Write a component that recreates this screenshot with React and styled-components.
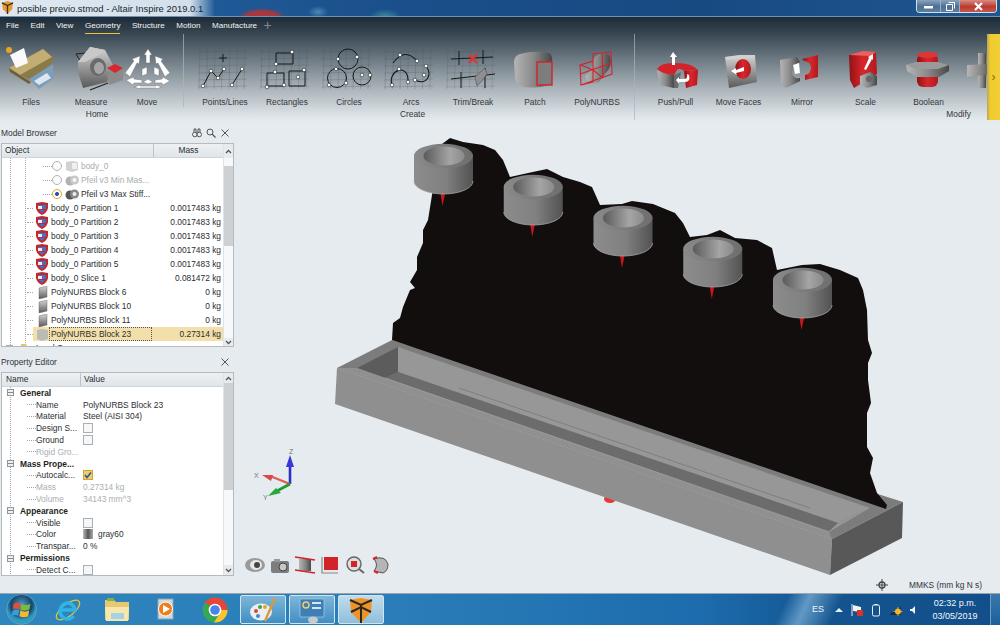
import React from 'react'
import styled, { createGlobalStyle } from 'styled-components'

const Global = createGlobalStyle`
  html, body { margin: 0; padding: 0; height: 100%; overflow: hidden; }
  body { font-family: "Liberation Sans", Arial, sans-serif; color: #2a2d30; }
  * { box-sizing: border-box; }
`

const Screen = styled.div`
  width: 1000px;
  height: 625px;
  display: flex;
  flex-direction: column;
  overflow: hidden;
  background: #e5ebef;
`

const DefsHost = styled.svg`
  position: absolute;
  width: 0;
  height: 0;
`

/* title bar */
const TitleBar = styled.div`
  height: 17px;
  flex: none;
  display: flex;
  align-items: flex-start;
  border-bottom: 1px solid #6f93b8;
  background:
    radial-gradient(ellipse 24px 9px at 262px 17px, #a8383f 0, #a8383f 60%, transparent 100%),
    radial-gradient(ellipse 10px 6px at 318px 12px, #4f86b5 0, transparent 100%),
    radial-gradient(ellipse 16px 8px at 385px 17px, #3f8d9b 0, transparent 100%),
    linear-gradient(90deg, #dfe8f1 0, #d3e0ec 190px, #1f5a96 215px, #1a4f8b 400px, #184a82 700px, #1e5690 1000px);
`
const AppGlyph = styled.svg`
  width: 13px;
  height: 13px;
  margin: 1px 3px 0 1px;
  flex: none;
`
const TitleText = styled.div`
  font-size: 9.45px;
  line-height: 17px;
  color: #20262c;
  white-space: nowrap;
`
const WindowButtons = styled.div`
  margin-left: auto;
  margin-right: 3px;
  display: flex;
  height: 13px;
  border: 1px solid #d7dfe7;
  border-top: 0;
  border-radius: 0 0 4px 4px;
  overflow: hidden;
`
const WindowButton = styled.div`
  width: ${p => p.$w}px;
  display: flex;
  align-items: center;
  justify-content: center;
  border-right: 1px solid #9cb0c4;
  background: ${p => p.$close
    ? 'linear-gradient(#d98d85, #b93a2e 55%, #c4574a)'
    : 'linear-gradient(#8aa3bd, #4c6f93 55%, #5e7f9f)'};
  &:last-child { border-right: 0; }
`

/* ribbon */
const RibbonArea = styled.div`
  height: 105px;
  flex: none;
  display: flex;
  flex-direction: column;
  background: linear-gradient(#1d2b36 0, #3b4a55 18%, #78848d 45%, #aab3b9 68%, #dde3e7 94%, #e5ebef 100%);
`
const MenuBar = styled.div`
  height: 17px;
  flex: none;
  display: flex;
  align-items: center;
  padding-left: 6px;
  gap: 11.5px;
`
const MenuItem = styled.div`
  font-size: 8.1px;
  line-height: 17px;
  height: 17px;
  color: #f3f5f6;
  box-shadow: ${p => p.$active ? 'inset 0 -1px 0 #e8c43c' : 'none'};
`
const MenuPlus = styled.span`
  font-size: 14px;
  line-height: 17px;
  margin-left: -5px;
  color: #7f8a92;
`
const ToolStrip = styled.div`
  flex: 1;
  display: flex;
  min-height: 0;
`
const Group = styled.div`
  width: ${p => p.$w}px;
  flex: none;
  display: flex;
  flex-direction: column;
  height: 86px;
  overflow: hidden;
  background: ${p => p.$sep
    ? `linear-gradient(rgba(170, 180, 187, .7), rgba(170, 180, 187, .7)) right top / 1px ${p.$sep}px no-repeat`
    : 'none'};
`
const ToolRow = styled.div`
  display: flex;
  height: 74px;
  padding-left: ${p => p.$pad}px;
`
const Tool = styled.div`
  width: ${p => p.$w}px;
  flex: none;
  display: flex;
  flex-direction: column;
  align-items: center;
`
const ToolIcon = styled.svg`
  width: 60px;
  height: 48px;
  flex: none;
  margin-top: 10px;
  overflow: visible;
`
const ToolLabel = styled.div`
  font-size: 8.4px;
  line-height: 12px;
  margin-top: 4px;
  white-space: nowrap;
  color: #33383c;
`
const GroupLabel = styled.div`
  font-size: 8.4px;
  line-height: 12px;
  color: #33383c;
  text-align: ${p => p.$right ? 'right' : 'center'};
  padding: ${p => p.$right ? '0 16px 0 0' : `0 0 0 ${p.$pad}px`};
`
const ExpandHandle = styled.div`
  width: 13px;
  height: 86px;
  flex: none;
  display: flex;
  align-items: center;
  justify-content: center;
  font-size: 12px;
  color: #7a6210;
  background: linear-gradient(90deg, #b7a659, #f0cb2c 25%, #f2cf38);
`

/* main area */
const Main = styled.div`
  flex: 1;
  display: flex;
  min-height: 0;
`
const SidePanel = styled.div`
  width: 235px;
  flex: none;
  display: flex;
  flex-direction: column;
  padding-left: 1px;
`
const PanelHead = styled.div`
  display: flex;
  align-items: center;
  height: ${p => p.$h}px;
  padding: ${p => p.$pt}px 5px 0 0;
  font-size: 8.4px;
  color: #30353a;
`
const PanelTools = styled.div`
  margin-left: auto;
  display: flex;
  align-items: center;
  gap: 4px;
`
const HeadIcon = styled.svg`
  width: 10px;
  height: 10px;
`
const Frame = styled.div`
  width: 233px;
  height: ${p => p.$h}px;
  flex: none;
  display: flex;
  border: 1px solid #b4bbc0;
  background: #fff;
  overflow: hidden;
`
const FrameLeft = styled.div`
  flex: 1;
  min-width: 0;
  display: flex;
  flex-direction: column;
`
const ColumnHeads = styled.div`
  height: 14px;
  flex: none;
  display: flex;
  background: linear-gradient(#eef1f3, #dfe5e9);
  border-bottom: 1px solid #cfd5d9;
`
const ColumnHead = styled.div`
  width: ${p => p.$w ? `${p.$w}px` : 'auto'};
  flex: ${p => p.$w ? 'none' : '1'};
  padding-left: ${p => p.$pad || 0}px;
  font-size: 8.4px;
  line-height: 13px;
  text-align: ${p => p.$center ? 'center' : 'left'};
  border-right: ${p => p.$w ? '1px solid #bcc4c9' : '0'};
`
const dots = x => `linear-gradient(#a9a9a9 50%, transparent 50%) ${x}px 0 / 1px 2px repeat-y`
const TreeBody = styled.div`
  flex: 1;
  overflow: hidden;
  padding-top: 1px;
  background: ${dots(8)}, ${dots(23)};
`
const TreeRow = styled.div`
  height: 14px;
  flex: none;
  display: flex;
  align-items: center;
`
const Tick = styled.div`
  width: ${p => p.$w}px;
  margin-left: ${p => p.$ml}px;
  flex: none;
  border-top: 1px dotted #a5a5a5;
`
const RowBody = styled.div`
  flex: 1;
  height: 14px;
  min-width: 0;
  display: flex;
  align-items: center;
  background: ${p => p.$selected ? '#f3dfa9' : 'transparent'};
`
const RowGlyph = styled.svg`
  width: ${p => p.$w || 14}px;
  height: 13px;
  flex: none;
  opacity: ${p => p.$muted ? 0.45 : 1};
`
const RowName = styled.div`
  flex: none;
  width: ${p => p.$w}px;
  height: 14px;
  line-height: 12px;
  font-size: 8.4px;
  white-space: nowrap;
  padding-left: 1px;
  overflow: hidden;
  border: 1px ${p => p.$selected ? 'dotted #555' : 'solid transparent'};
  color: ${p => p.$muted ? '#a8acae' : '#2b2f33'};
`
const RowMass = styled.div`
  flex: 1;
  font-size: 8.4px;
  text-align: right;
  white-space: nowrap;
  padding-right: 2px;
`
const Radio = styled.span`
  width: 10px;
  height: 10px;
  flex: none;
  margin-right: 3px;
  border-radius: 50%;
  border: 1px solid ${p => p.$on ? '#d9a825' : '#aeb3b6'};
  background: ${p => p.$on ? 'radial-gradient(#2a55a8 0 30%, #fff 40%)' : '#fbfbfb'};
`
const LoadBox = styled.span`
  width: 7px;
  height: 7px;
  flex: none;
  margin: 0 7px 0 4px;
  border: 1px solid #a9aeb2;
`
const Scrollbar = styled.div`
  width: 10px;
  flex: none;
  display: flex;
  flex-direction: column;
  background: #f7f8f9;
  border-left: 1px solid #dfe3e6;
`
const ScrollArrow = styled.div`
  height: ${p => p.$h}px;
  flex: none;
  display: flex;
  align-items: center;
  justify-content: center;
  background: #e7ebee;
  & svg { width: 7px; height: 5px; }
`
const ScrollTrack = styled.div`
  flex: 1;
  padding-top: ${p => p.$top}px;
`
const ScrollThumb = styled.div`
  height: ${p => p.$h}px;
  background: #cdd1d4;
`
const PropBody = styled.div`
  flex: 1;
  overflow: hidden;
  background: ${dots(8)};
`
const PropRow = styled.div`
  height: 11.8px;
  display: flex;
  align-items: center;
  font-size: 8.4px;
  white-space: nowrap;
  color: ${p => p.$muted ? '#aab0b3' : '#2b2f33'};
`
const CategoryBox = styled.span`
  width: 7px;
  height: 7px;
  flex: none;
  margin: 0 6px 0 5px;
  background: linear-gradient(#888, #888) center / 5px 1px no-repeat, #eef1f3;
  border: 1px solid #8e979d;
`
const CategoryName = styled.span`
  font-weight: bold;
  color: #1c1f22;
`
const PropName = styled.div`
  width: 44px;
  flex: none;
  overflow: hidden;
`
const PropValue = styled.div`
  margin-left: 3px;
  display: flex;
  align-items: center;
  gap: 5px;
`
const Check = styled.span`
  width: 10px;
  height: 10px;
  flex: none;
  display: flex;
  align-items: center;
  justify-content: center;
  border: 1px solid ${p => p.$on ? '#c9a63a' : '#a9aeb2'};
  background: ${p => p.$on ? '#f1cf60' : '#f6f7f8'};
  & svg { width: 8px; height: 8px; }
`
const Swatch = styled.span`
  width: 10px;
  height: 10px;
  flex: none;
  background: linear-gradient(90deg, #bbb, #555 50%, #aaa);
`

/* viewport */
const Viewport = styled.div`
  flex: 1;
  min-width: 0;
  position: relative;
  display: flex;
  align-items: flex-end;
  justify-content: space-between;
`
const Scene = styled.svg`
  position: absolute;
  inset: 0;
  width: 765px;
  height: 471px;
`
const ViewTools = styled.div`
  position: relative;
  display: flex;
  align-items: center;
  gap: 3px;
  margin: 0 0 19px 9px;
`
const ViewTool = styled.svg`
  width: 22px;
  height: 18px;
  flex: none;
`
const UnitBar = styled.div`
  position: relative;
  display: flex;
  align-items: center;
  margin: 0 18px 2px 0;
  font-size: 8.4px;
  color: #30353a;
`
const Crosshair = styled.svg`
  width: 12px;
  height: 12px;
  margin-right: 21px;
`

/* taskbar */
const Taskbar = styled.div`
  height: 32px;
  flex: none;
  display: flex;
  align-items: stretch;
  border-top: 1px solid #9aa5ad;
  background:
    linear-gradient(115deg, transparent 715px, rgba(160, 205, 235, .55) 735px, transparent 765px),
    linear-gradient(90deg, #2f85bd 0, #2a7db8 400px, #1d6cad 700px, #13548f 830px, #124f8a 1000px);
`
const TaskSlot = styled.div`
  width: ${p => p.$w}px;
  flex: none;
  display: flex;
  align-items: center;
  justify-content: center;
`
const TaskButton = styled.div`
  width: 46px;
  margin: 1px 3px 1px 0;
  flex: none;
  display: flex;
  align-items: center;
  justify-content: center;
  border: 1px solid #d0e4f1;
  border-radius: 2px;
  background: ${p => p.$active
    ? 'linear-gradient(#c2dcec, #8fbfdc)'
    : 'linear-gradient(#7fb6d8, #3f8fc4)'};
`
const TaskGlyph = styled.svg`
  width: ${p => p.$size || 28}px;
  height: ${p => p.$size || 28}px;
`
const Tray = styled.div`
  margin-left: auto;
  display: flex;
  align-items: stretch;
`
const TrayText = styled.div`
  width: ${p => p.$w}px;
  flex: none;
  display: flex;
  flex-direction: column;
  align-items: center;
  justify-content: center;
  font-size: 9px;
  line-height: 12.5px;
  color: #f2f6fa;
`
const TrayGlyph = styled.svg`
  width: 14px;
  height: 14px;
`
const ShowDesktop = styled.div`
  width: 10px;
  flex: none;
  border-left: 1px solid #6f9cc2;
  background: linear-gradient(#3a78ac, #1d5f9b);
`

const grid = (() => {
  let d = ''
  for (let i = 0; i < 7; i++) d += `M${5 + i * 7.5} 5L${4 + i * 7.5} 45`
  for (let i = 0; i < 6; i++) d += `M3 ${8 + i * 7}L52 ${7 + i * 7}`
  return d
})()

const Sketch = ({ children, dots: pts }) => (
  <ToolIcon viewBox="0 0 60 48">
    <path d={grid} stroke="#4d555b" strokeWidth=".6" opacity=".45" fill="none" />
    <g fill="none" stroke="#15191c" strokeWidth="1">{children}</g>
    {pts.map(([x, y], i) => <circle key={i} cx={x} cy={y} r="1.8" fill="#fff" stroke="#222" strokeWidth=".6" />)}
  </ToolIcon>
)

const FilesIcon = () => (
  <ToolIcon viewBox="0 0 60 48">
    <polygon points="8,24 42,5 53,14 50,20 34,38 30,37" fill="#8a7a48" />
    <polygon points="28,35 52,20 53,34 38,45" fill="#7d9dbd" />
    <polygon points="33,37 46,29 50,34 38,41" fill="#dde7ef" />
    <polygon points="8,24 42,5 51,13 19,31" fill="#c2ae72" />
    <polygon points="8,24 19,31 30,38 28,40 9,28" fill="#6f6136" />
    <polygon points="9,11 23,4 27,19 15,24" fill="#fafafa" />
    <circle cx="8" cy="6" r="3" fill="#e9a520" />
  </ToolIcon>
)
const MeasureIcon = () => (
  <ToolIcon viewBox="0 0 60 48">
    <path d="M15 10L24 9M15 10L20 18" stroke="#222" strokeWidth="1" fill="none" />
    <polygon points="17,18 29,3 44,6 52,21 46,38 22,44 17,28" fill="url(#metalV)" />
    <polygon points="17,18 29,3 44,6 36,12 24,18" fill="#c9c9c9" />
    <ellipse cx="37" cy="23" rx="8" ry="9" fill="#6a6a6a" />
    <ellipse cx="38" cy="24" rx="5" ry="6" fill="#a5a5a5" />
    <polygon points="46,30 62,26 62,36 48,41" fill="#8b8b8b" />
    <polygon points="46,24 54,20 62,24 54,29" fill="#d8282c" />
    <path d="M29 46L47 39" stroke="#222" strokeWidth="1.2" />
  </ToolIcon>
)
const MoveIcon = () => (
  <ToolIcon viewBox="0 0 60 48">
    <g fill="#fff" stroke="#777" strokeWidth=".5">
      <polygon points="31,5 35,11 33,11 33,19 29,19 29,11 27,11" />
      <polygon points="11,31 8,29 17,17 15,15 23,12 22,20 20,19 13,33" />
      <polygon points="50,31 53,29 44,17 46,15 38,12 39,20 41,19 48,33" />
      <polygon points="25,25 30,23 30,30 25,32" />
      <polygon points="37,23 42,25 42,32 37,30" />
      <polygon points="9,36 17,33 17,35 25,36 25,39 17,39 16,41" />
      <polygon points="53,37 46,33 45,35 38,36 38,39 45,39 46,41" />
      <polygon points="26,38 31,35 36,38 31,40" />
      <polygon points="17,43 23,41 23,42 39,42 39,41 45,43 39,45 39,44 23,44 23,45" />
    </g>
  </ToolIcon>
)
const PointsIcon = () => (
  <Sketch dots={[[8, 42], [16, 27], [23, 34], [29, 25], [37, 41], [47, 25]]}>
    <path d="M8 42L16 27L23 34L29 25M37 41L47 25M28 10V18M24 14H32" />
  </Sketch>
)
const RectanglesIcon = () => (
  <Sketch dots={[[35, 8], [19, 20], [18, 28], [10, 43], [27, 41], [47, 26], [41, 33]]}>
    <path d="M19 9H36V20H19ZM10 29H27V42H10ZM32 27H48V42H32Z" />
  </Sketch>
)
const CirclesIcon = () => (
  <Sketch dots={[[19, 15], [38, 13], [17, 25], [10, 41], [27, 39], [43, 31], [51, 31]]}>
    <circle cx="29" cy="15" r="10" /><circle cx="18" cy="34" r="9.5" /><circle cx="43" cy="32" r="9" />
  </Sketch>
)
const ArcsIcon = () => (
  <Sketch dots={[[19, 11], [36, 17], [18, 25], [11, 41], [27, 38], [34, 36], [43, 31], [45, 22]]}>
    <path d="M12 19Q24 3 36 17M11 41C6 26 28 18 27 38M34 36C46 42 52 30 45 22" strokeWidth="1.1" />
  </Sketch>
)
const TrimIcon = () => (
  <ToolIcon viewBox="0 0 60 48">
    <path d={grid} stroke="#4d555b" strokeWidth=".5" opacity=".4" fill="none" />
    <path d="M8 15L50 13M16 7V21M40 6V20M8 35L52 30M18 28V44M42 24V44" stroke="#15191c" strokeWidth="1" fill="none" />
    <path d="M26 11L34 19M34 10L26 19" stroke="#e0352e" strokeWidth="2.2" />
    <path d="M32 33L42 24L44 30L38 38L34 42Z" fill="#8f8f8f" stroke="#444" strokeWidth=".5" />
  </ToolIcon>
)
const PatchIcon = () => (
  <ToolIcon viewBox="0 0 60 48">
    <path d="M15 10Q30 6 44 9Q48 11 47 18L46 40Q30 46 16 42Q10 40 10 34L9 18Q9 12 15 10Z" fill="url(#metalH)" />
    <rect x="32" y="18" width="15" height="23" fill="#7d7d7d" stroke="#d2232a" strokeWidth="1.4" />
  </ToolIcon>
)
const PolyIcon = () => (
  <ToolIcon viewBox="0 0 60 48">
    <path d="M27 14Q36 4 43 12Q46 22 38 30L32 38Q20 42 18 32Q24 28 25 22Z" fill="url(#metalH)" />
    <path d="M26 10L44 8L45 30L14 41L13 21L26 17ZM35 9L36 34M26 10V38M13 30L45 19M14 21L26 26L36 34M26 38L14 41" fill="none" stroke="#d2232a" strokeWidth="1.1" />
  </ToolIcon>
)
const PushIcon = () => (
  <ToolIcon viewBox="0 0 60 48">
    <polygon points="38,27 52,26 51,41 40,44" fill="url(#redH)" />
    <polygon points="11,26 28,31 28,44 14,41" fill="url(#metalH)" />
    <polygon points="28,31 35,28 32,44 28,44" fill="#6b6b6b" />
    <path d="M11 25Q14 19 27 19Q45 18 52 26L38 27Q32 22 30 28L28 31Q16 30 11 25Z" fill="#d2232a" />
    <polygon points="27,8 31,13 29,13 29,21 26,21 26,13 24,13" fill="#fff" />
    <path d="M30 36L33 33V35H38Q42 35 41 30L43 31Q45 38 39 38H33V40Z" fill="#fff" />
  </ToolIcon>
)
const FacesIcon = () => (
  <ToolIcon viewBox="0 0 60 48">
    <polygon points="16,13 46,11 48,38 20,44" fill="url(#metalV)" />
    <polygon points="16,13 30,11 46,11 44,14 18,16" fill="#d0d0d0" />
    <ellipse cx="34" cy="25" rx="8" ry="10" fill="url(#redH)" />
    <polygon points="22,27 27,24 27,26 35,23 35,27 27,29 28,31" fill="#fff" />
  </ToolIcon>
)
const MirrorIcon = () => (
  <ToolIcon viewBox="0 0 60 48">
    <path d="M8 16L25 13L28 18Q19 22 20 30Q22 35 28 34V37L14 44L9 40Z" fill="url(#metalH)" />
    <path d="M30 15L46 11L46 33L33 36V31Q39 30 39 23Q38 17 32 17Z" fill="url(#redH)" />
    <polygon points="21,21 27,19 28,29 23,30" fill="#fff" />
  </ToolIcon>
)
const ScaleIcon = () => (
  <ToolIcon viewBox="0 0 60 48">
    <polygon points="13,11 40,8 41,30 18,44 14,36" fill="url(#redH)" />
    <polygon points="13,11 27,7 40,8 34,12" fill="#ef5f5f" />
    <polygon points="24,32 34,28 41,32 41,41 31,44 24,40" fill="url(#metalH)" />
    <circle cx="33" cy="35" r="3" fill="#666" />
    <polygon points="37,10 37,16 36,15 30,26 28,25 33,14 32,13" fill="#fff" />
  </ToolIcon>
)
const BooleanIcon = () => (
  <ToolIcon viewBox="0 0 60 48">
    <rect x="18" y="10" width="21" height="33" rx="6" fill="url(#redH)" />
    <ellipse cx="28.5" cy="11" rx="10.5" ry="3" fill="#e23434" />
    <polygon points="7,21 18,18 39,18 50,21 50,27 40,33 18,33 8,27" fill="url(#metalH)" />
    <polygon points="7,21 18,18 39,18 50,21 39,25 18,25" fill="#9a9a9a" />
  </ToolIcon>
)
const PartialIcon = () => (
  <ToolIcon viewBox="0 0 60 48">
    <rect x="35" y="9" width="8" height="35" fill="url(#metalH)" />
    <polygon points="24,21 50,20 50,30 24,33" fill="url(#metalH)" />
  </ToolIcon>
)

const Shield = () => (
  <RowGlyph viewBox="0 0 14 13">
    <path d="M1 1L7 0L13 1V6Q12 11 7 13Q2 11 1 6Z" fill="#c2272d" />
    <rect x="3" y="3" width="8" height="4" fill="#3f73c9" />
    <rect x="3" y="4" width="4" height="3" fill="#e8eef6" />
    <path d="M4 8H10L7 11Z" fill="#3f73c9" />
  </RowGlyph>
)
const BlockGlyph = ({ selected }) => (
  <RowGlyph viewBox="0 0 14 13">
    {selected
      ? <path d="M2 2L7 1L13 2V11L7 13L2 11Z" fill="#b9bcb6" />
      : <path d="M4 2L12 0V11L4 13Z" fill="url(#metalV)" stroke="#555" strokeWidth=".4" />}
  </RowGlyph>
)
const GhostGlyph = () => (
  <RowGlyph viewBox="0 0 14 13" $muted>
    <path d="M1 2L7 1L13 2V10L7 12L1 10Z" fill="#9a9a9a" /><path d="M7 3H12V9H7Z" fill="#dcdcdc" />
  </RowGlyph>
)
const PartGlyph = ({ muted }) => (
  <RowGlyph viewBox="0 0 14 13" $muted={muted}>
    <circle cx="5" cy="7" r="4.5" fill="#555" /><circle cx="9.5" cy="6" r="4.5" fill="#888" /><circle cx="9.5" cy="6" r="2" fill="#eee" />
  </RowGlyph>
)

const parts = [
  'body_0 Partition 1', 'body_0 Partition 2', 'body_0 Partition 3',
  'body_0 Partition 4', 'body_0 Partition 5',
]

const SubRow = ({ name, glyph, on, muted }) => (
  <TreeRow>
    <Tick $ml={41} $w={9} />
    <RowBody>
      <Radio $on={on} />
      {glyph}
      <RowName $w={86} $muted={muted}>{name}</RowName>
    </RowBody>
  </TreeRow>
)

const ItemRow = ({ name, mass, glyph, selected }) => (
  <TreeRow>
    <Tick $ml={25} $w={6} />
    <RowBody $selected={selected}>
      <RowGlyph $w={2} as="span" />
      {glyph}
      <RowName $w={103} $selected={selected}>{name}</RowName>
      <RowMass>{mass}</RowMass>
    </RowBody>
  </TreeRow>
)

const Arrow = ({ up }) => (
  <svg viewBox="0 0 7 5"><path d={up ? 'M1 4L3.5 1.5L6 4' : 'M1 1L3.5 3.5L6 1'} fill="none" stroke="#555" strokeWidth="1.3" /></svg>
)

const CloseGlyph = () => (
  <HeadIcon viewBox="0 0 10 10"><path d="M1.5 1.5L8.5 8.5M8.5 1.5L1.5 8.5" stroke="#555" strokeWidth="1" /></HeadIcon>
)

const ModelBrowser = () => (
  <>
    <PanelHead $h={21} $pt={1}>
      Model Browser
      <PanelTools>
        <HeadIcon viewBox="0 0 10 10"><circle cx="2.8" cy="6.5" r="2.3" fill="none" stroke="#555" /><circle cx="7.2" cy="6.5" r="2.3" fill="none" stroke="#555" /><path d="M2 4V1H4V5M8 4V1H6V5" fill="none" stroke="#555" /></HeadIcon>
        <HeadIcon viewBox="0 0 10 10"><circle cx="4" cy="4" r="3" fill="none" stroke="#555" /><path d="M6 6L9.5 9.5" stroke="#555" strokeWidth="1.3" /></HeadIcon>
        <CloseGlyph />
      </PanelTools>
    </PanelHead>
    <Frame $h={204}>
      <FrameLeft>
        <ColumnHeads>
          <ColumnHead $w={152} $pad={3}>Object</ColumnHead>
          <ColumnHead $center>Mass</ColumnHead>
        </ColumnHeads>
        <TreeBody>
          <SubRow name="body_0" glyph={<GhostGlyph />} muted />
          <SubRow name="Pfeil v3 Min Mas..." glyph={<PartGlyph muted />} muted />
          <SubRow name="Pfeil v3 Max Stiff..." glyph={<PartGlyph />} on />
          {parts.map(p => <ItemRow key={p} name={p} mass="0.0017483 kg" glyph={<Shield />} />)}
          <ItemRow name="body_0 Slice 1" mass="0.081472 kg" glyph={<Shield />} />
          <ItemRow name="PolyNURBS Block 6" mass="0 kg" glyph={<BlockGlyph />} />
          <ItemRow name="PolyNURBS Block 10" mass="0 kg" glyph={<BlockGlyph />} />
          <ItemRow name="PolyNURBS Block 11" mass="0 kg" glyph={<BlockGlyph />} />
          <ItemRow name="PolyNURBS Block 23" mass="0.27314 kg" glyph={<BlockGlyph selected />} selected />
          <TreeRow>
            <LoadBox />
            <RowGlyph viewBox="0 0 14 13"><path d="M1 2H6L7 4H13V12H1Z" fill="#e3c56d" /></RowGlyph>
            <RowName $w={80}>Load Cases</RowName>
          </TreeRow>
        </TreeBody>
      </FrameLeft>
      <Scrollbar>
        <ScrollArrow $h={14}><Arrow up /></ScrollArrow>
        <ScrollTrack $top={8}><ScrollThumb $h={80} /></ScrollTrack>
        <ScrollArrow $h={8}><Arrow /></ScrollArrow>
      </Scrollbar>
    </Frame>
  </>
)

const Prop = ({ name, muted, children }) => (
  <PropRow $muted={muted}>
    <Tick $ml={25} $w={9} />
    <PropName>{name}</PropName>
    <PropValue>{children}</PropValue>
  </PropRow>
)
const Category = ({ name }) => (
  <PropRow><CategoryBox /><CategoryName>{name}</CategoryName></PropRow>
)

const PropertyEditor = () => (
  <>
    <PanelHead $h={25} $pt={4}>
      Property Editor
      <PanelTools><CloseGlyph /></PanelTools>
    </PanelHead>
    <Frame $h={204}>
      <FrameLeft>
        <ColumnHeads>
          <ColumnHead $w={79} $pad={4}>Name</ColumnHead>
          <ColumnHead $pad={3}>Value</ColumnHead>
        </ColumnHeads>
        <PropBody>
          <Category name="General" />
          <Prop name="Name">PolyNURBS Block 23</Prop>
          <Prop name="Material">Steel (AISI 304)</Prop>
          <Prop name="Design S..."><Check /></Prop>
          <Prop name="Ground"><Check /></Prop>
          <Prop name="Rigid Gro..." muted />
          <Category name="Mass Prope..." />
          <Prop name="Autocalc...">
            <Check $on><svg viewBox="0 0 8 8"><path d="M1 4L3 6.5L7 1.5" fill="none" stroke="#2a55a8" strokeWidth="1.6" /></svg></Check>
          </Prop>
          <Prop name="Mass" muted>0.27314 kg</Prop>
          <Prop name="Volume" muted>34143 mm^3</Prop>
          <Category name="Appearance" />
          <Prop name="Visible"><Check /></Prop>
          <Prop name="Color"><Swatch />gray60</Prop>
          <Prop name="Transpar...">0 %</Prop>
          <Category name="Permissions" />
          <Prop name="Detect C..."><Check /></Prop>
        </PropBody>
      </FrameLeft>
      <Scrollbar>
        <ScrollArrow $h={10}><Arrow up /></ScrollArrow>
        <ScrollTrack $top={0}><ScrollThumb $h={107} /></ScrollTrack>
        <ScrollArrow $h={10}><Arrow /></ScrollArrow>
      </Scrollbar>
    </Frame>
  </>
)

const silhouette = [
  [442, 144], [450, 138], [463, 142], [483, 145], [495, 150], [503, 160], [510, 177], [528, 173], [547, 169],
  [563, 177], [580, 182], [592, 187], [600, 205], [622, 204], [632, 201], [653, 204], [675, 213], [683, 223],
  [690, 237], [707, 235], [720, 230], [735, 238], [757, 240], [772, 248], [777, 270], [802, 265], [820, 264],
  [840, 270], [858, 278], [863, 290], [867, 310], [868, 340], [872, 353], [868, 363], [868, 380], [871, 403],
  [867, 413], [867, 447], [873, 458], [870, 473], [877, 493], [887, 505], [886, 509], [392, 340],
  [393, 323], [400, 318], [403, 307], [410, 290], [415, 288], [410, 282], [417, 270], [417, 257], [423, 243],
  [423, 230], [428, 220], [432, 195],
].map(p => p.join(',')).join(' ')

const Ring = ({ i }) => {
  const x = 414 + i * 89.75
  const y = 144 + i * 31
  const cx = x + 29.5
  return (
    <g>
      <polygon points={`${cx - 3},${y + 50} ${cx + 1.5},${y + 50} ${cx - 1},${y + 62}`} fill="#c8161d" />
      <path d={`M${x} ${y + 12}V${y + 37}A29.5 13 0 0 0 ${x + 59} ${y + 37}V${y + 12}Z`} fill="url(#ringSide)" />
      <path d={`M${x} ${y + 37}A29.5 13 0 0 0 ${x + 59} ${y + 37}`} fill="none" stroke="#a4a4a4" strokeWidth=".8" />
      <ellipse cx={cx} cy={y + 12} rx="29.5" ry="12.2" fill="url(#ringTop)" />
      <ellipse cx={cx + 0.5} cy={y + 12} rx="20.5" ry="9.5" fill="url(#ringHole)" />
    </g>
  )
}

const Triad = () => (
  <g>
    <text x="289" y="454" fontSize="7" fill="#777" fontFamily="Liberation Sans">Z</text>
    <text x="254" y="478" fontSize="7" fill="#777" fontFamily="Liberation Sans">X</text>
    <text x="263" y="500" fontSize="7" fill="#777" fontFamily="Liberation Sans">Y</text>
    <path d="M290 484V462" stroke="#2f2fc8" strokeWidth="2.6" />
    <polygon points="290,455 294,467 286,467" fill="#3838d8" />
    <path d="M290 484L270 476" stroke="#e45858" strokeWidth="2.4" />
    <polygon points="262,475 273,475 271,481" fill="#d84a4a" />
    <path d="M290 484L275 492" stroke="#1f9a2e" strokeWidth="2.8" />
    <polygon points="268,496 276,488 281,493" fill="#28a83a" />
  </g>
)

const ModelScene = () => (
  <Scene viewBox="235 122 765 471">
    <ellipse cx="610" cy="499" rx="6" ry="4" fill="#e8383a" />
    <polygon points="337,368 392,340 903,502 832,539" fill="#7c7c7c" />
    <polygon points={silhouette} fill="#130e0e" />
    <polygon points="398,347 870,508 838,523 398,372" fill="#979797" />
    <polygon points="838,523 870,508 829,532" fill="#969696" />
    <polygon points="357,368 398,347 398,372 385,378" fill="#5c5c5c" />
    <polygon points="398,372 838,523 829,531 385,378" fill="#6c6c6c" />
    <polygon points="337,368 357,368 829,532 832,539" fill="#909090" />
    <path d="M385 378L829 532L838 524" stroke="#a2a2a2" strokeWidth=".7" fill="none" />
    <path d="M459 388L810 508" stroke="#747474" strokeWidth=".7" fill="none" />
    <polygon points="337,368 832,539 830,575 335,404" fill="#8f8f8f" />
    <polygon points="832,539 903,502 902,538 830,575" fill="#585858" />
    {[0, 1, 2, 3, 4].map(i => <Ring key={i} i={i} />)}
    <Triad />
  </Scene>
)

const ViewIcons = () => (
  <>
    <ViewTool viewBox="0 0 22 18">
      <ellipse cx="11" cy="9" rx="10" ry="7" fill="#9a9a9a" /><ellipse cx="12" cy="9" rx="6" ry="5" fill="#e8e8e8" /><circle cx="13" cy="9" r="3" fill="#444" />
    </ViewTool>
    <ViewTool viewBox="0 0 22 18">
      <rect x="2" y="5" width="18" height="12" rx="2" fill="#7d7d7d" /><circle cx="14" cy="11" r="4" fill="#c8c8c8" stroke="#444" /><rect x="5" y="3" width="6" height="3" fill="#999" />
    </ViewTool>
    <ViewTool viewBox="0 0 22 18">
      <rect x="5" y="3" width="12" height="12" fill="url(#metalH)" /><path d="M1 1L21 4M1 14L21 17" stroke="#d2232a" strokeWidth="1.4" />
    </ViewTool>
    <ViewTool viewBox="0 0 22 18">
      <rect x="5" y="1" width="14" height="13" fill="#d2232a" /><path d="M3 1V17H19" fill="none" stroke="#888" strokeWidth="1.2" />
    </ViewTool>
    <ViewTool viewBox="0 0 22 18">
      <circle cx="10" cy="8" r="7" fill="#ddd" stroke="#666" strokeWidth="1.4" /><rect x="7" y="5" width="6" height="6" fill="#d2232a" /><path d="M15 13L20 17" stroke="#666" strokeWidth="2" />
    </ViewTool>
    <ViewTool viewBox="0 0 22 18">
      <path d="M5 3Q16 -1 19 8Q19 15 14 17L5 15Q10 9 5 3Z" fill="#b5b5b5" stroke="#555" /><path d="M4 3L8 1M5 15L9 17" stroke="#d2232a" strokeWidth="2" />
    </ViewTool>
  </>
)

const StartOrb = () => (
  <TaskGlyph viewBox="0 0 28 28" $size={31}>
    <circle cx="14" cy="14" r="13.5" fill="url(#orb)" stroke="#6fa5c7" strokeWidth=".6" />
    <path d="M7 9Q10 7 13 9L12 14Q9 12 6 14Z" fill="#e2502f" />
    <path d="M14 9Q18 11 22 9L21 14Q17 16 13 14Z" fill="#7fbb3a" />
    <path d="M6 15Q9 13 12 15L11 20Q8 18 5 20Z" fill="#3b9bdc" />
    <path d="M13 15Q17 17 21 15L20 20Q16 22 12 20Z" fill="#f2b92b" />
  </TaskGlyph>
)
const IeGlyph = () => (
  <TaskGlyph viewBox="0 0 28 28">
    <ellipse cx="14" cy="14" rx="14" ry="6" transform="rotate(-38 14 14)" fill="none" stroke="#e6c52e" strokeWidth="1.3" />
    <path d="M7 14H21A7.5 8 0 1 0 19.5 20" fill="none" stroke="#2fb4e6" strokeWidth="3.4" />
  </TaskGlyph>
)
const FolderGlyph = () => (
  <TaskGlyph viewBox="0 0 28 28">
    <path d="M2 4H11L13 6H26V24H2Z" fill="#e7c871" />
    <rect x="4" y="2" width="7" height="3" fill="#7cb44a" />
    <path d="M2 11H26L25 25H3Z" fill="#f6e7ad" />
    <rect x="8" y="17" width="13" height="6" rx="1" fill="#a8d1e6" />
  </TaskGlyph>
)
const MediaGlyph = () => (
  <TaskGlyph viewBox="0 0 28 28">
    <rect x="6" y="3" width="15" height="20" fill="#cfd9df" stroke="#8ea2ad" />
    <circle cx="13.5" cy="13" r="7" fill="#ef7d1c" stroke="#fff" strokeWidth="1" />
    <path d="M11 9L18 13L11 17Z" fill="#fff" />
  </TaskGlyph>
)
const ChromeGlyph = () => (
  <TaskGlyph viewBox="0 0 28 28">
    <circle cx="14" cy="14" r="12.5" fill="#36a853" />
    <path d="M14 1.5A12.5 12.5 0 0 1 26.5 14H14L8 8.5L3.5 7A12.5 12.5 0 0 1 14 1.5Z" fill="#e8453a" />
    <path d="M14 14H26.5A12.5 12.5 0 0 1 13 26.5L19 17Z" fill="#f8c52f" />
    <circle cx="14" cy="14" r="6.3" fill="#fff" /><circle cx="14" cy="14" r="4.8" fill="#4a84e8" />
  </TaskGlyph>
)
const PaintGlyph = () => (
  <TaskGlyph viewBox="0 0 28 28">
    <ellipse cx="12" cy="16" rx="11" ry="8.5" fill="#e9eef0" />
    <circle cx="7" cy="15" r="2" fill="#d8493f" /><circle cx="11" cy="11" r="2" fill="#49a046" /><circle cx="16" cy="11" r="2" fill="#e6a326" /><circle cx="9" cy="20" r="2" fill="#4a84c8" />
    <path d="M26 2L16 25" stroke="#d89b3c" strokeWidth="2.4" />
  </TaskGlyph>
)
const PanelGlyph = () => (
  <TaskGlyph viewBox="0 0 28 28">
    <rect x="2" y="3" width="24" height="18" rx="1" fill="#3f7fb5" stroke="#b9d7ea" strokeWidth=".6" />
    <circle cx="8" cy="9" r="3" fill="none" stroke="#f2d06a" strokeWidth="1.4" />
    <path d="M14 7H23M14 12H23" stroke="#cfe6f4" strokeWidth="2" />
    <ellipse cx="15" cy="24" rx="5" ry="3.4" fill="#c8ccce" />
  </TaskGlyph>
)
const InspireGlyph = () => (
  <TaskGlyph viewBox="0 0 28 28">
    <path d="M3 4L14 2L25 4L24 16L14 27L4 16Z" fill="#ee9427" />
    <path d="M3 4L14 9L25 4M14 9V27M4 16L14 11L24 16" fill="none" stroke="#2a2624" strokeWidth="2" />
  </TaskGlyph>
)

const App = () => (
  <Screen>
    <Global />
    <DefsHost aria-hidden="true">
      <defs>
        <linearGradient id="metalH"><stop offset="0" stopColor="#b5b5b5" /><stop offset=".5" stopColor="#8a8a8a" /><stop offset="1" stopColor="#484848" /></linearGradient>
        <linearGradient id="metalV" x2="0" y2="1"><stop offset="0" stopColor="#d5d5d5" /><stop offset="1" stopColor="#5a5a5a" /></linearGradient>
        <linearGradient id="redH"><stop offset="0" stopColor="#8f1216" /><stop offset=".5" stopColor="#d9272c" /><stop offset="1" stopColor="#b01a1f" /></linearGradient>
        <linearGradient id="ringSide"><stop offset="0" stopColor="#8c8c8c" /><stop offset=".55" stopColor="#808080" /><stop offset="1" stopColor="#525252" /></linearGradient>
        <linearGradient id="ringTop"><stop offset="0" stopColor="#8a8a8a" /><stop offset="1" stopColor="#6e6e6e" /></linearGradient>
        <linearGradient id="ringHole"><stop offset="0" stopColor="#5a5a5a" /><stop offset=".65" stopColor="#a5a5a5" /><stop offset="1" stopColor="#8a8a8a" /></linearGradient>
        <radialGradient id="orb" cy=".35"><stop offset="0" stopColor="#5b9ac4" /><stop offset=".7" stopColor="#14466f" /><stop offset="1" stopColor="#2f9ac0" /></radialGradient>
      </defs>
    </DefsHost>

    <TitleBar>
      <AppGlyph viewBox="0 0 14 14">
        <path d="M1 2L7 0L13 2L12 9L7 14L2 9Z" fill="#e89a30" />
        <path d="M1 2L7 5L13 2M7 5V14" stroke="#3a3028" strokeWidth="1.4" fill="none" />
      </AppGlyph>
      <TitleText>posible previo.stmod - Altair Inspire 2019.0.1</TitleText>
      <WindowButtons>
        <WindowButton $w={24}><svg width="9" height="6"><rect y="3" width="9" height="2.5" fill="#fff" /></svg></WindowButton>
        <WindowButton $w={19}><svg width="9" height="9"><path d="M2.5 .5H8.5V6.5M.5 2.5H6.5V8.5H.5Z" fill="none" stroke="#fff" /></svg></WindowButton>
        <WindowButton $w={36} $close><svg width="9" height="9"><path d="M1 1L8 8M8 1L1 8" stroke="#fff" strokeWidth="2.2" /></svg></WindowButton>
      </WindowButtons>
    </TitleBar>

    <RibbonArea>
      <MenuBar>
        <MenuItem>File</MenuItem>
        <MenuItem>Edit</MenuItem>
        <MenuItem>View</MenuItem>
        <MenuItem $active>Geometry</MenuItem>
        <MenuItem>Structure</MenuItem>
        <MenuItem>Motion</MenuItem>
        <MenuItem>Manufacture</MenuItem>
        <MenuPlus>+</MenuPlus>
      </MenuBar>
      <ToolStrip>
        <Group $w={184} $sep={73}>
          <ToolRow $pad={1}>
            <Tool $w={60}><FilesIcon /><ToolLabel>Files</ToolLabel></Tool>
            <Tool $w={60}><MeasureIcon /><ToolLabel>Measure</ToolLabel></Tool>
            <Tool $w={52}><MoveIcon /><ToolLabel>Move</ToolLabel></Tool>
          </ToolRow>
          <GroupLabel $pad={10}>Home</GroupLabel>
        </Group>
        <Group $w={451} $sep={86}>
          <ToolRow $pad={10}>
            <Tool $w={62}><PointsIcon /><ToolLabel>Points/Lines</ToolLabel></Tool>
            <Tool $w={62}><RectanglesIcon /><ToolLabel>Rectangles</ToolLabel></Tool>
            <Tool $w={62}><CirclesIcon /><ToolLabel>Circles</ToolLabel></Tool>
            <Tool $w={62}><ArcsIcon /><ToolLabel>Arcs</ToolLabel></Tool>
            <Tool $w={62}><TrimIcon /><ToolLabel>Trim/Break</ToolLabel></Tool>
            <Tool $w={62}><PatchIcon /><ToolLabel>Patch</ToolLabel></Tool>
            <Tool $w={62}><PolyIcon /><ToolLabel>PolyNURBS</ToolLabel></Tool>
          </ToolRow>
          <GroupLabel $pad={6}>Create</GroupLabel>
        </Group>
        <Group $w={352}>
          <ToolRow $pad={9}>
            <Tool $w={63}><PushIcon /><ToolLabel>Push/Pull</ToolLabel></Tool>
            <Tool $w={63}><FacesIcon /><ToolLabel>Move Faces</ToolLabel></Tool>
            <Tool $w={64}><MirrorIcon /><ToolLabel>Mirror</ToolLabel></Tool>
            <Tool $w={63}><ScaleIcon /><ToolLabel>Scale</ToolLabel></Tool>
            <Tool $w={63}><BooleanIcon /><ToolLabel>Boolean</ToolLabel></Tool>
            <Tool $w={26}><PartialIcon /></Tool>
          </ToolRow>
          <GroupLabel $right>Modify</GroupLabel>
        </Group>
        <ExpandHandle>›</ExpandHandle>
      </ToolStrip>
    </RibbonArea>

    <Main>
      <SidePanel>
        <ModelBrowser />
        <PropertyEditor />
      </SidePanel>
      <Viewport>
        <ModelScene />
        <ViewTools><ViewIcons /></ViewTools>
        <UnitBar>
          <Crosshair viewBox="0 0 12 12">
            <circle cx="6" cy="6" r="3" fill="none" stroke="#444" strokeWidth="1.3" />
            <path d="M6 0V12M0 6H12" stroke="#444" />
          </Crosshair>
          MMKS (mm kg N s)
        </UnitBar>
      </Viewport>
    </Main>

    <Taskbar>
      <TaskSlot $w={43}><StartOrb /></TaskSlot>
      <TaskSlot $w={49}><IeGlyph /></TaskSlot>
      <TaskSlot $w={49}><FolderGlyph /></TaskSlot>
      <TaskSlot $w={49}><MediaGlyph /></TaskSlot>
      <TaskSlot $w={50}><ChromeGlyph /></TaskSlot>
      <TaskButton><PaintGlyph /></TaskButton>
      <TaskButton><PanelGlyph /></TaskButton>
      <TaskButton $active><InspireGlyph /></TaskButton>
      <Tray>
        <TrayText $w={22}>ES</TrayText>
        <TaskSlot $w={19}><TrayGlyph viewBox="0 0 14 14"><path d="M3 9L7 5L11 9Z" fill="#e8eff5" /></TrayGlyph></TaskSlot>
        <TaskSlot $w={18}><TrayGlyph viewBox="0 0 14 14"><path d="M2 1V13" stroke="#eee" /><path d="M3 2L11 4V9L3 8Z" fill="#f2f2f2" /><rect x="7" y="7" width="6" height="6" fill="#d8322c" /></TrayGlyph></TaskSlot>
        <TaskSlot $w={20}><TrayGlyph viewBox="0 0 14 14"><rect x="3.5" y="2" width="7" height="11" rx="1.5" fill="none" stroke="#f0f0f0" /><rect x="5.5" y="1" width="3" height="1" fill="#f0f0f0" /></TrayGlyph></TaskSlot>
        <TaskSlot $w={20}><TrayGlyph viewBox="0 0 14 14"><path d="M1 11L12 4V12H1Z" fill="#0f2f4d" /><circle cx="9" cy="8.5" r="3" fill="#f2b52b" /><path d="M9 4V13M4.5 8.5H13.5" stroke="#f2b52b" strokeWidth=".8" /></TrayGlyph></TaskSlot>
        <TaskSlot $w={14}><TrayGlyph viewBox="0 0 14 14"><path d="M4 6H6L9 3V11L6 8H4Z" fill="#f2f2f2" /></TrayGlyph></TaskSlot>
        <TrayText $w={70}><span>02:32 p.m.</span><span>03/05/2019</span></TrayText>
        <ShowDesktop />
      </Tray>
    </Taskbar>
  </Screen>
)

export default App
